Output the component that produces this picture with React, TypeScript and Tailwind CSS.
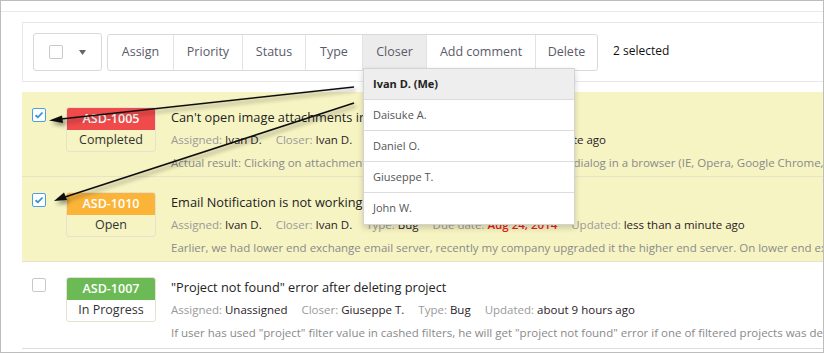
import React from "react";

const FONT = { fontFamily: '"Open Sans", "Noto Sans", Arial, sans-serif' };

function Check({ checked }: { checked?: boolean }) {
  if (checked)
    return (
      <div className="w-[14px] h-[14px] border border-[#4aa0e6] rounded-[2px] bg-white flex items-center justify-center">
        <svg width="10" height="8" viewBox="0 0 10 8">
          <path d="M1.5 4.2 L3.9 6.3 L8.5 1.5" stroke="#3a8fd8" strokeWidth="1.8" fill="none" />
        </svg>
      </div>
    );
  return <div className="w-[14px] h-[14px] border border-[#c9c9c9] rounded-[2px] bg-white" />;
}

function Meta({ label, value, red }: { label: string; value: string; red?: boolean }) {
  return (
    <span className="mr-[14px] whitespace-nowrap">
      <span className="text-[#9a9a9a]">{label}: </span>
      <span className={red ? "text-[#ee1c1c] font-semibold" : "text-[#2a1a2a]"}>{value}</span>
    </span>
  );
}

type Row = {
  id: string;
  status: string;
  color: string;
  checked: boolean;
  title: string;
  meta: { label: string; value: string; red?: boolean }[];
  desc: string;
  yellow: boolean;
};

const rows: Row[] = [
  {
    id: "ASD-1005",
    status: "Completed",
    color: "bg-[#f04a4a]",
    checked: true,
    title: "Can't open image attachments in browser",
    meta: [
      { label: "Assigned", value: "Ivan D." },
      { label: "Closer", value: "Ivan D." },
      { label: "Type", value: "Bug" },
      { label: "Updated", value: "less than a minute ago" },
    ],
    desc: "Actual result: Clicking on attachment thumbnail opens a file download files-dialog in a browser (IE, Opera, Google Chrome, Firefox) instead of preview",
    yellow: true,
  },
  {
    id: "ASD-1010",
    status: "Open",
    color: "bg-[#fbb438]",
    checked: true,
    title: "Email Notification is not working",
    meta: [
      { label: "Assigned", value: "Ivan D." },
      { label: "Closer", value: "Ivan D." },
      { label: "Type", value: "Bug" },
      { label: "Due date", value: "Aug 24, 2014", red: true },
      { label: "Updated", value: "less than a minute ago" },
    ],
    desc: "Earlier, we had lower end exchange email server, recently my company upgraded it the higher end server. On lower end exchange server notifications worked fine",
    yellow: true,
  },
  {
    id: "ASD-1007",
    status: "In Progress",
    color: "bg-[#6cba55]",
    checked: false,
    title: "\"Project not found\" error after deleting project",
    meta: [
      { label: "Assigned", value: "Unassigned" },
      { label: "Closer", value: "Giuseppe T." },
      { label: "Type", value: "Bug" },
      { label: "Updated", value: "about 9 hours ago" },
    ],
    desc: "If user has used \"project\" filter value in cashed filters, he will get \"project not found\" error if one of filtered projects was deleted",
    yellow: false,
  },
];

const buttons = [
  { label: "Assign", w: "w-[65px]" },
  { label: "Priority", w: "w-[69px]" },
  { label: "Status", w: "w-[63px]" },
  { label: "Type", w: "w-[57px]" },
  { label: "Closer", w: "w-[64px]", active: true },
  { label: "Add comment", w: "w-[109px]" },
  { label: "Delete", w: "w-[62px]" },
];

const people = ["Ivan D. (Me)", "Daisuke A.", "Daniel O.", "Giuseppe T.", "John W."];

export default function App() {
  return (
    <div
      style={FONT}
      className="relative w-[824px] h-[353px] overflow-hidden bg-white border border-[#bdbdbd] text-[#333]"
    >
      <div className="mt-[10px] border-t border-[#e9e9e9]" />
      <div className="pl-[21px] pt-[10px]">
        {/* toolbar */}
        <div className="h-[60px] border border-r-0 border-[#e8e8e8] flex items-center pl-[10px]">
          <div className="w-[69px] h-[38px] border border-[#d9d9d9] rounded-[3px] flex items-center pl-[15px] gap-[16px]">
            <div className="w-[14px] h-[14px] border border-[#c9c9c9] rounded-[2px]" />
            <svg width="7" height="5" viewBox="0 0 7 5">
              <path d="M0 0 L7 0 L3.5 5 Z" fill="#666" />
            </svg>
          </div>
          <div className="ml-[5px] flex h-[37px] border border-[#d9d9d9] rounded-[3px] relative">
            {buttons.map((b, i) => (
              <div
                key={b.label}
                className={`${b.w} flex items-center justify-center text-[12.5px] text-[#5a5a6a] ${
                  i > 0 ? "border-l border-[#e3e3e3]" : ""
                } ${b.active ? "bg-[#ececec]" : ""}`}
              >
                {b.label}
              </div>
            ))}
          </div>
          <div className="ml-[15px] text-[12px] text-[#111] -mt-[2px]">2 selected</div>
        </div>

        {/* rows */}
        <div className="mt-[10px]">
          {rows.map((r, i) => (
            <div
              key={r.id}
              className={`flex border-b ${
                r.yellow ? "bg-[#f6f4c2] border-[#e6e4c4]" : "bg-white border-[#dedede]"
              } ${i === 2 ? "h-[87px]" : "h-[85px]"}`}
            >
              <div className="pl-[10px] pt-[16px] w-[44px] shrink-0">
                <Check checked={r.checked} />
              </div>
              <div className="pt-[15px] shrink-0">
                <div className="w-[90px] rounded-[3px] overflow-hidden border border-[#e4e2d0] bg-transparent">
                  <div className={`${r.color} h-[22px] flex items-center justify-center text-white text-[12.5px] font-semibold`}>
                    {r.id}
                  </div>
                  <div className="h-[21px] flex items-center justify-center text-[12.5px] text-[#333]">
                    {r.status}
                  </div>
                </div>
              </div>
              <div className="pl-[15px] pt-[16px] min-w-0 flex-1 overflow-hidden whitespace-nowrap">
                <div className="text-[12.75px] text-[#222] leading-[18px]">{r.title}</div>
                <div className="text-[11.5px] leading-[16px] mt-[6px]">
                  {r.meta.map((m) => (
                    <Meta key={m.label} {...m} />
                  ))}
                </div>
                <div className="text-[11.5px] leading-[16px] mt-[7px] text-[#8a8a8a]">{r.desc}</div>
              </div>
            </div>
          ))}
        </div>
      </div>

      {/* dropdown */}
      <div className="absolute left-[362px] top-[67px] w-[212px] bg-white border border-[#d4d4d4] shadow-[0_3px_6px_rgba(0,0,0,0.18)]">
        {people.map((p, i) => (
          <div
            key={p}
            className={`h-[31px] flex items-center pl-[9px] text-[11px] ${
              i < people.length - 1 ? "border-b border-[#dcdcdc]" : ""
            } ${i === 0 ? "bg-[#eeeeee] font-bold text-[#222]" : "text-[#555]"}`}
          >
            {p}
          </div>
        ))}
      </div>

      {/* annotation arrows */}
      <svg className="absolute left-0 top-0 pointer-events-none" width="824" height="353">
        <defs>
          <filter id="sh" x="-10%" y="-50%" width="120%" height="200%">
            <feGaussianBlur in="SourceAlpha" stdDeviation="2" />
            <feOffset dx="2" dy="3" result="b" />
            <feComponentTransfer>
              <feFuncA type="linear" slope="0.45" />
            </feComponentTransfer>
            <feMerge>
              <feMergeNode />
              <feMergeNode in="SourceGraphic" />
            </feMerge>
          </filter>
        </defs>
        <g filter="url(#sh)">
          <line x1="353" y1="86" x2="60" y2="118" stroke="#111" strokeWidth="1.6" />
          <path d="M48 119.5 L61 114.5 L62 122 Z" fill="#111" />
          <line x1="353" y1="102" x2="64" y2="196" stroke="#111" strokeWidth="1.6" />
          <path d="M53 200 L63 191.5 L66 199 Z" fill="#111" />
        </g>
      </svg>
    </div>
  );
}
